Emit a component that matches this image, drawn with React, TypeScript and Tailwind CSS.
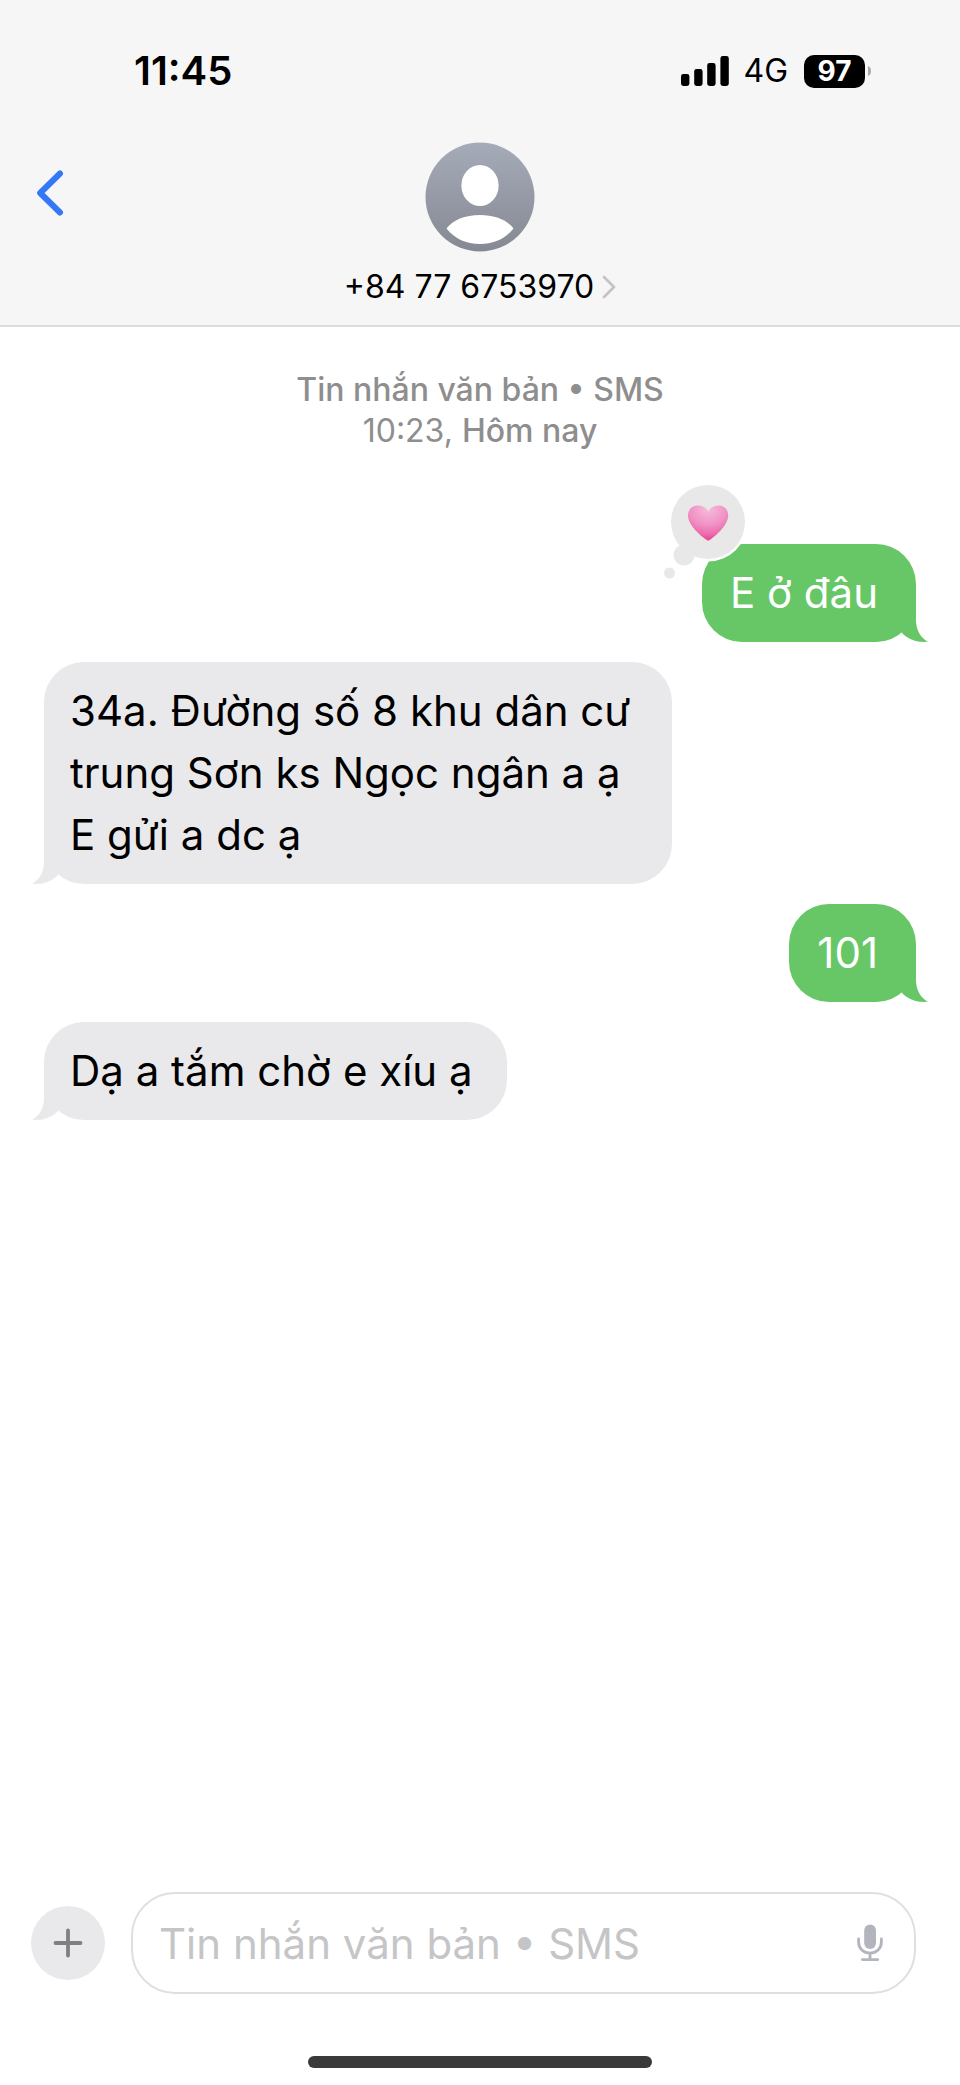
import { useState, ChangeEvent } from 'react'
import clsx from 'clsx'

interface Message {
    id: number,
    text: string,
    sent: boolean,
    loved?: boolean
}

const messages: Message[] = [
    { id: 1, text: 'E ở đâu', sent: true, loved: true },
    { id: 2, text: '34a. Đường số 8 khu dân cư trung Sơn ks Ngọc ngân a ạ\nE gửi a dc ạ', sent: false },
    { id: 3, text: '101', sent: true },
    { id: 4, text: 'Dạ a tắm chờ e xíu ạ', sent: false },
]

const StatusBar = () => (
    <div className="flex items-center justify-between h-[142px] pl-[134px] pr-[88px]">
        <span className="text-[40px] leading-[46px] font-semibold">11:45</span>
        <div className="flex items-center">
            <svg width="48" height="30" viewBox="0 0 48 30" aria-hidden="true">
                <rect x="0" y="18" width="8.4" height="12" rx="2.4" />
                <rect x="13.2" y="13" width="8.4" height="17" rx="2.4" />
                <rect x="26.2" y="7" width="8.4" height="23" rx="2.4" />
                <rect x="39.4" y="0" width="8.4" height="30" rx="2.4" />
            </svg>
            <span className="ml-[14px] text-[32px] leading-[40px]">4G</span>
            <div className="ml-4 flex items-center gap-[2px]">
                <span className="w-[61px] h-[33px] rounded-[10px] bg-black text-white text-[28px] leading-[33px] font-bold text-center">97</span>
                <svg width="5" height="12" viewBox="0 0 5 12" aria-hidden="true">
                    <path d="M1 1C5 2 5 10 1 11Z" fill="#a9a9a9" />
                </svg>
            </div>
        </div>
    </div>
)

const Avatar = () => (
    <svg width="110" height="110" viewBox="0 0 110 110" aria-hidden="true">
        <defs>
            <linearGradient id="avatar" x1="0" y1="0" x2="0" y2="1">
                <stop offset="0" stopColor="#a6abb9" />
                <stop offset="1" stopColor="#858993" />
            </linearGradient>
        </defs>
        <circle cx="55" cy="55" r="54.5" fill="url(#avatar)" />
        <ellipse cx="55" cy="43.5" rx="18.6" ry="20.6" fill="#fff" />
        <path d="M21.5 86.5C28 78 40 73 55 73S82 78 88.5 86.5C80 97 69 102 55 102S30 97 21.5 86.5Z" fill="#fff" />
    </svg>
)

const Header = () => (
    <header className="bg-[#f6f6f6] border-b-2 border-[#dcdcdc]">
        <StatusBar />
        <div className="relative flex justify-center h-[183px]">
            <button type="button" aria-label="Quay lại" className="absolute left-9 top-7">
                <svg width="28" height="46" viewBox="0 0 28 46" fill="none" stroke="#3478f6" strokeWidth="6" strokeLinecap="round" strokeLinejoin="round">
                    <path d="M24 3.5L4.2 23L24 42.5" />
                </svg>
            </button>
            <button type="button" className="flex flex-col items-center">
                <Avatar />
                <span className="mt-[14px] flex items-center gap-2 text-[32px] leading-[41px]">
                    +84 77 6753970
                    <svg width="14" height="24" viewBox="0 0 14 24" fill="none" stroke="#c4c4c6" strokeWidth="2.8" strokeLinecap="round" strokeLinejoin="round">
                        <path d="M2 2L12 12L2 22" />
                    </svg>
                </span>
            </button>
        </div>
    </header>
)

// thought bubble with the heart, hangs over the top left corner of a message
const HeartReaction = () => (
    <svg className="absolute -left-10 -top-[62px]" width="90" height="98" viewBox="0 0 90 98" role="img" aria-label="Yêu thích">
        <defs>
            <radialGradient id="heart" cx="0.5" cy="0.1" r="0.9">
                <stop offset="0" stopColor="#f6bbdb" />
                <stop offset="0.5" stopColor="#f093c5" />
                <stop offset="0.8" stopColor="#ec6bac" />
                <stop offset="1" stopColor="#e8408f" />
            </radialGradient>
        </defs>
        <circle cx="46" cy="40" r="39.5" fill="#fff" />
        <g fill="#e8e8e9">
            <circle cx="46" cy="40" r="37" />
            <circle cx="22" cy="73" r="10.5" />
            <circle cx="7.5" cy="91" r="5.5" />
        </g>
        <path
            d="M46.3 58.6C44.5 58.6 26 45 26 33.5C26 27.5 30 23.6 35.5 23.6C40.5 23.6 44.5 26 46.3 29.3C48 26 52 23.6 57 23.6C62.3 23.6 66.2 27.5 66.2 33.5C66.2 45 48 58.6 46.3 58.6Z"
            fill="url(#heart)"
        />
    </svg>
)

const Tail = ({ sent }: { sent: boolean }) => (
    <svg
        className={clsx('absolute bottom-0', sent ? '-right-3 text-[#67c767]' : '-left-3 -scale-x-100 text-[#e9e9eb]')}
        width="38"
        height="46"
        viewBox="0 0 38 46"
        fill="currentColor"
        aria-hidden="true"
    >
        <path d="M12 0H26V25C26.5 35 31 42 38 45.8C27 46.6 19 44 12 37Z" />
    </svg>
)

const Bubble = ({ message }: { message: Message }) => (
    <li
        className={clsx(
            'relative w-fit max-w-[72%] rounded-[40px] py-[18px] text-[42px] leading-[62px] whitespace-pre-line',
            message.sent ? 'self-end pl-7 pr-[38px] bg-[#67c767] text-white' : 'self-start pl-[26px] pr-[34px] bg-[#e9e9eb] text-black'
        )}
    >
        {message.text}
        <Tail sent={message.sent} />
        {message.loved && <HeartReaction />}
    </li>
)

const Composer = () => {
    const [draft, setDraft] = useState<string>('')

    const handleChange = (e: ChangeEvent<HTMLInputElement>) => {
        setDraft(e.target.value)
    }

    return (
        <form className="flex items-center gap-[26px] pl-[31px] pr-11" onSubmit={(e) => e.preventDefault()}>
            <button type="button" aria-label="Thêm" className="grid place-items-center size-[74px] shrink-0 rounded-full bg-[#e9e9eb]">
                <svg width="30" height="30" viewBox="0 0 30 30" stroke="#7f7f84" strokeWidth="3.8" strokeLinecap="round">
                    <path d="M15 2.5V27.5M2.5 15H27.5" />
                </svg>
            </button>
            <div className="flex flex-1 items-center min-w-0 h-[102px] rounded-[44px] border-2 border-[#dfdfe0] pl-[26px] pr-[31px]">
                <input
                    type="text"
                    aria-label="Tin nhắn"
                    placeholder="Tin nhắn văn bản • SMS"
                    value={draft}
                    onChange={handleChange}
                    className="flex-1 min-w-0 h-[62px] bg-transparent text-[42px] outline-none placeholder:text-[#c5c5c7]"
                />
                <button type="button" aria-label="Đọc chính tả">
                    <svg width="26" height="38" viewBox="0 0 26 38" fill="none" stroke="#b2b5be" strokeWidth="2.8" strokeLinecap="round">
                        <rect x="7.2" y="0.6" width="11.8" height="24.4" rx="5.9" fill="#b2b5be" stroke="none" />
                        <path d="M1.6 15V18C1.6 24.6 6.6 29.2 13 29.2S24.4 24.6 24.4 18V15M13 29.2V35.6M5.4 35.6H20.8" />
                    </svg>
                </button>
            </div>
        </form>
    )
}

const App = () => {
    return (
        <div className="min-h-screen flex flex-col bg-white text-black font-['Inter','Liberation_Sans',sans-serif]">
            <Header />
            <main className="flex-1 flex flex-col px-11 pt-[42px]">
                <div className="text-center text-[32px] leading-[41px] text-[#8e8e8e]">
                    <p className="font-medium">Tin nhắn văn bản • SMS</p>
                    <p>10:23, <span className="font-medium">Hôm nay</span></p>
                </div>
                <ul className="mt-[93px] flex flex-col gap-5">
                    {
                        messages.map((message) => (
                            <Bubble key={message.id} message={message} />
                        ))
                    }
                </ul>
            </main>
            <footer className="flex flex-col gap-[62px] pb-[17px]">
                <Composer />
                <div className="mx-auto w-[344px] h-3 rounded-full bg-[#3a3a3a]"></div>
            </footer>
        </div>
    )
}

export default App
